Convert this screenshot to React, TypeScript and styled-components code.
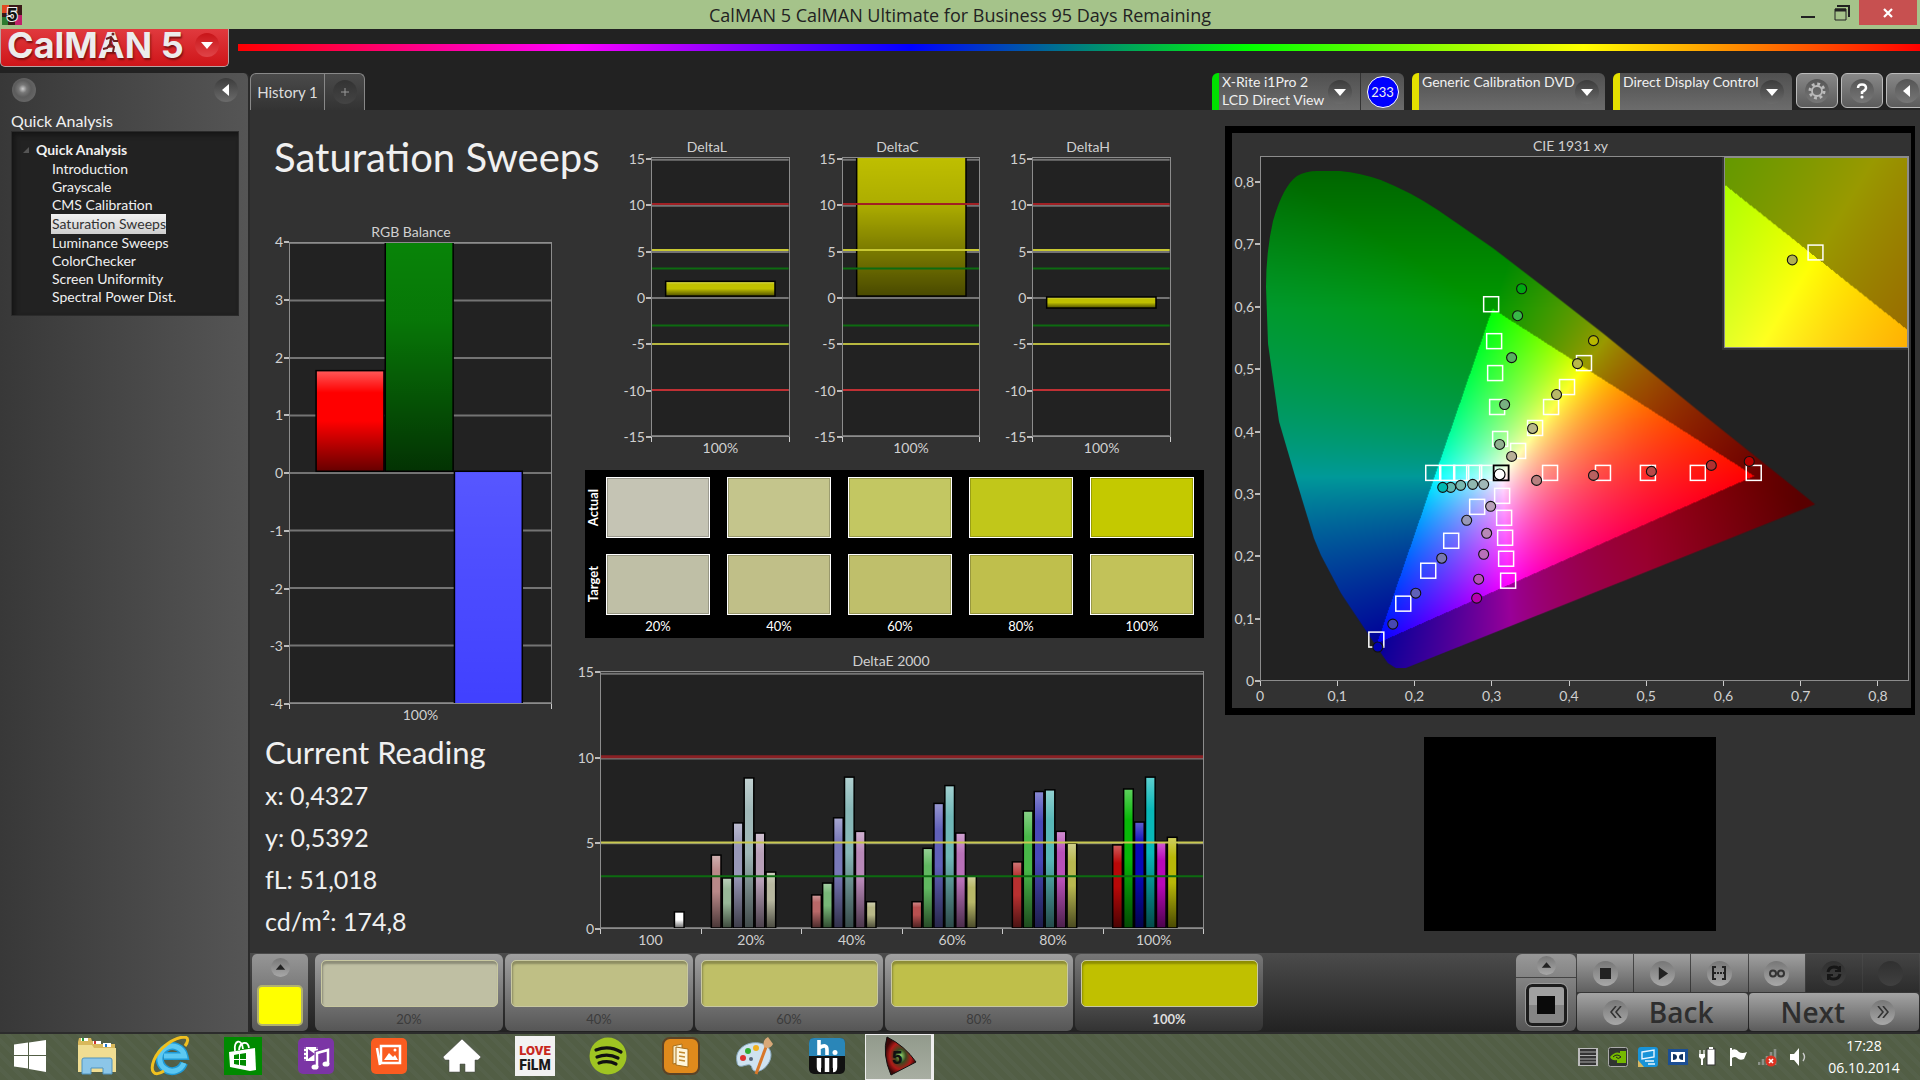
import React, { useEffect, useRef } from 'react';
import styled, { createGlobalStyle } from 'styled-components';

const ui = `Lato, "Open Sans", sans-serif`;
const sys = `"Open Sans", "Noto Sans", sans-serif`;

const GlobalStyle = createGlobalStyle`
  *, *::before, *::after { box-sizing: border-box; }
  body { margin: 0; background: #222; font-family: ${ui}; color: #f0f0f0; }
  button { font: inherit; color: inherit; border: 0; padding: 0; background: none; cursor: pointer; }
  h1, h2, h3, p, ul, dl, dd, dt, figure { margin: 0; padding: 0; }
  ul { list-style: none; }
  a { color: inherit; text-decoration: none; }
  svg, canvas { display: block; }
`;

/* ---------- shell ---------- */

const Page = styled.div`
  min-height: 100vh;
  display: grid;
  grid-template-rows: 29px 1fr 48px;
`;

const TitleBar = styled.header`
  display: grid;
  grid-template-columns: 1fr auto 1fr;
  align-items: center;
  background: #a5c38a;
  color: #222;
`;

const TitleText = styled.div`
  font: 18px/28px ${sys};
  white-space: nowrap;
`;

const WindowButtons = styled.div`
  justify-self: end;
  align-self: start;
  display: flex;
  padding-right: 3px;
`;

const WindowButton = styled.button<{ $close?: boolean }>`
  width: ${p => (p.$close ? 58 : 34)}px;
  height: 25px;
  display: grid;
  place-items: center;
  background: ${p => (p.$close ? '#c75050' : 'transparent')};
`;

const AppArea = styled.div`
  display: flex;
  flex-direction: column;
  background: #222;
`;

const BrandRow = styled.div`
  display: flex;
  height: 44px;
  gap: 9px;
`;

const Brand = styled.button`
  width: 229px;
  height: 38px;
  display: flex;
  align-items: center;
  justify-content: space-between;
  padding: 0 9px 6px 6px;
  border: 1px solid #b9a0a0;
  border-top: 0;
  border-radius: 0 0 5px 5px;
  background: linear-gradient(#e03a3e, #cf1519);
`;

const BrandText = styled.span`
  font: 700 36px/32px Inter, sans-serif;
  color: #ececec;
  text-shadow: 1px 2px 2px #7a1010;
  white-space: nowrap;
`;

const BrandA = styled.span`
  position: relative;
  svg { position: absolute; left: 4px; top: 8px; }
`;

const Rainbow = styled.div`
  flex: 1;
  height: 7px;
  margin-top: 15px;
  background: linear-gradient(90deg, #f00, #f0f 20%, #00f 40%, #0f0 60%, #ff0 80%, #f00);
`;

const Body = styled.div`
  flex: 1;
  display: flex;
`;

const Knob = styled.span<{ $size?: number; $tone?: string }>`
  flex: none;
  width: ${p => p.$size ?? 24}px;
  height: ${p => p.$size ?? 24}px;
  display: grid;
  place-items: center;
  border-radius: 50%;
  background: ${p => p.$tone ?? 'linear-gradient(#3c3c3c, #6b6b6b)'};
`;

/* ---------- sidebar ---------- */

const Sidebar = styled.aside`
  flex: none;
  width: 250px;
  border-right: 2px solid #2a2a2a;
  border-top-right-radius: 6px;
  background: linear-gradient(90deg, #383838, #555);
`;

const SidebarTools = styled.div`
  display: flex;
  justify-content: space-between;
  padding: 5px 10px 0 12px;
`;

const SidebarTitle = styled.h2`
  padding: 9px 11px 0;
  font-size: 16px;
  font-weight: 400;
  line-height: 20px;
`;

const Tree = styled.nav`
  margin: 0 9px 0 11px;
  padding: 8px 0 9px;
  border: 1px solid #2b2b2b;
  background: #222;
  box-shadow: inset 3px 3px 5px #151515;
  font-size: 14px;
  line-height: 18px;
`;

const TreeHead = styled.div`
  display: flex;
  align-items: center;
  gap: 7px;
  padding-left: 11px;
  font-weight: 700;
  line-height: 20px;
`;

const TreeLink = styled.a<{ $active?: boolean }>`
  display: block;
  width: fit-content;
  margin-left: 39px;
  padding-left: 1px;
  line-height: ${p => (p.$active ? 20 : 18)}px;
  background: ${p => (p.$active ? 'linear-gradient(#f2f2f2, #cfcfcf)' : 'none')};
  color: ${p => (p.$active ? '#333' : '#f0f0f0')};
`;

/* ---------- top tabs ---------- */

const Content = styled.main`
  flex: 1;
  min-width: 0;
  display: flex;
  flex-direction: column;
`;

const TabRow = styled.div`
  display: flex;
  justify-content: space-between;
  height: 37px;
  overflow: hidden;
`;

const Tabs = styled.div`
  display: flex;
  border: 1px solid #888;
  border-bottom: 0;
  border-radius: 6px 6px 0 0;
  background: linear-gradient(#4a4a4a, #333);
`;

const Tab = styled.button<{ $add?: boolean }>`
  width: ${p => (p.$add ? 40 : 73)}px;
  display: grid;
  place-items: center;
  font-size: 15px;
  color: #ddd;
  border-left: ${p => (p.$add ? '1px solid #888' : '0')};
`;

const Devices = styled.div`
  display: flex;
  margin-right: -8px;
`;

const Device = styled.div<{ $bar: string; $w: number }>`
  display: flex;
  width: ${p => p.$w}px;
  margin-right: 8px;
  border-left: 7px solid ${p => p.$bar};
  border-radius: 6px 6px 0 0;
  background: linear-gradient(#505050, #6c6c6c);
  &:last-of-type { margin-right: 1px; }
`;

const DeviceMenu = styled.button`
  flex: 1;
  display: flex;
  justify-content: space-between;
  align-items: center;
  padding: 0 8px 0 3px;
  font-size: 14px;
  line-height: 18px;
  text-align: left;
  white-space: nowrap;
`;

const DeviceText = styled.span`
  align-self: start;
`;

const Meter = styled.span`
  display: grid;
  place-items: center;
  width: 44px;
  border-left: 1px solid #333;
`;

const MeterBadge = styled.span`
  width: 32px;
  height: 32px;
  border: 1px solid #fff;
  border-radius: 50%;
  background: #00f;
  font-size: 13px;
  line-height: 30px;
  text-align: center;
`;

const ToolButton = styled.button`
  width: 42px;
  height: 35px;
  margin-left: 3px;
  display: grid;
  place-items: center;
  border: 1px solid #bbb;
  border-radius: 6px;
  background: linear-gradient(#888, #5c5c5c);
`;

/* ---------- workspace ---------- */

const Workspace = styled.section`
  flex: 1;
  display: grid;
  grid-template-columns: 313fr 626fr 711fr;
  padding: 0 5px 0 15px;
  background: #323232;
`;

const LeftColumn = styled.div`
  min-width: 0;
  padding-top: 23px;
`;

const PageTitle = styled.h1`
  margin-bottom: 41px;
  padding-left: 9px;
  font-size: 40px;
  font-weight: 400;
  line-height: 48px;
  white-space: nowrap;
`;

const BalanceBox = styled.div`
  padding: 0 26px 0 5px;
`;

const Reading = styled.section`
  margin-top: 6px;
  font-size: 25px;
  line-height: 42px;
  h2 { font-size: 31px; font-weight: 400; line-height: 44px; }
`;

const MiddleColumn = styled.div`
  min-width: 0;
  padding-top: 27px;
`;

const DeltaRow = styled.div`
  display: grid;
  grid-template-columns: repeat(3, 1fr);
  gap: 25px;
  padding: 0 33px 0 46px;
`;

const RightColumn = styled.div`
  min-width: 0;
  padding: 16px 0 0 21px;
`;

const CiePanel = styled.div`
  padding: 3px 2px 3px 0;
  border: 7px solid #000;
  border-right-width: 4px;
`;

const Preview = styled.div`
  width: 292px;
  height: 194px;
  margin: 22px auto 0;
  background: #000;
`;

/* ---------- charts ---------- */

const Chart = styled.figure<{ $gutter: number }>`
  display: grid;
  grid-template-columns: ${p => p.$gutter}px minmax(0, 1fr);
  font-size: 14px;
  line-height: 18px;
  color: #d0d0d0;
`;

const ChartTitle = styled.figcaption`
  grid-column: 1 / -1;
  line-height: 20px;
  text-align: center;
`;

const YAxis = styled.div<{ $top: number }>`
  display: flex;
  flex-direction: column;
  justify-content: space-between;
  padding-top: ${p => p.$top}px;
`;

const YTick = styled.span`
  display: flex;
  align-items: center;
  justify-content: flex-end;
  height: 18px;
  margin: -9px 0;
  white-space: nowrap;
  &::after { content: ''; flex: none; width: 5px; height: 2px; margin-left: 1px; background: #bbb; }
`;

const Plot = styled.div<{ $h: number }>`
  display: grid;
  height: ${p => p.$h}px;
  border: 1px solid #8c8c8c;
  background: #222;
  & > * { grid-area: 1 / 1; width: 100%; height: 100%; min-height: 0; }
`;

const XAxis = styled.div<{ $right: number }>`
  grid-column: 2;
  padding-right: ${p => p.$right}px;
`;

const XTicks = styled.div`
  display: flex;
  justify-content: space-between;
  i { width: 1px; height: 5px; background: #ccc; }
`;

const XCategories = styled.div`
  display: flex;
  margin-top: -3px;
  span { flex: 1; text-align: center; }
`;

const XValues = styled.div`
  display: flex;
  justify-content: space-between;
  margin-top: 1px;
  span { width: 30px; margin: 0 -15px; text-align: center; }
`;

type Shade = 'gloss' | 'tall' | 'cool';
interface BarSpec { x: number; w: number; from: number; to: number; color: string; shade?: Shade }
interface Limit { v: number; color: string; w: number }

const pct = (n: number) => `${n}%`;

function BarChart(props: {
  id: string; title: string; gutter: number; height: number; min: number; max: number; top: number;
  ticks: number[]; categories: string[]; bars: BarSpec[]; limits?: Limit[];
}) {
  const { id, min, max, ticks, bars, limits = [] } = props;
  const y = (v: number) => ((max - v) / (max - min)) * 100;
  return (
    <Chart $gutter={props.gutter}>
      <ChartTitle>{props.title}</ChartTitle>
      <YAxis $top={props.top}>{ticks.map(t => <YTick key={t}>{t}</YTick>)}</YAxis>
      <Plot $h={props.height}>
        <svg aria-hidden="true">
          <defs>
            <linearGradient id={`${id}-gloss`} x1="0" y1="0" x2="0" y2="1">
              <stop offset="0" stopColor="#fff" stopOpacity=".35" />
              <stop offset=".22" stopColor="#fff" stopOpacity="0" />
              <stop offset=".5" stopColor="#000" stopOpacity="0" />
              <stop offset="1" stopColor="#000" stopOpacity=".6" />
            </linearGradient>
            <linearGradient id={`${id}-tall`} x1="0" y1="0" x2="0" y2="1">
              <stop offset="0" stopColor="#000" stopOpacity="0" />
              <stop offset=".35" stopColor="#000" stopOpacity=".1" />
              <stop offset="1" stopColor="#000" stopOpacity=".62" />
            </linearGradient>
            <linearGradient id={`${id}-cool`} x1="0" y1="0" x2="0" y2="1">
              <stop offset="0" stopColor="#fff" stopOpacity=".12" />
              <stop offset="1" stopColor="#fff" stopOpacity="0" />
            </linearGradient>
          </defs>
          {ticks.map(t => (
            <line key={t} x1="0" x2="100%" y1={pct(y(t))} y2={pct(y(t))} stroke="#747474" strokeWidth="2" />
          ))}
          {bars.map((b, i) => {
            const box = { x: pct(b.x), width: pct(b.w), y: pct(y(b.to)), height: pct(y(b.from) - y(b.to)) };
            return (
              <g key={i}>
                <rect {...box} fill={b.color} />
                <rect {...box} fill={`url(#${id}-${b.shade ?? 'gloss'})`} stroke="#000" strokeWidth="1.5" />
              </g>
            );
          })}
          {limits.map((l, i) => (
            <line key={i} x1="0" x2="100%" y1={pct(y(l.v))} y2={pct(y(l.v))} stroke={l.color} strokeWidth={l.w} />
          ))}
        </svg>
      </Plot>
      <XAxis $right={0}>
        <XTicks>{[...props.categories, ''].map((_, i) => <i key={i} />)}</XTicks>
        <XCategories>{props.categories.map(c => <span key={c}>{c}</span>)}</XCategories>
      </XAxis>
    </Chart>
  );
}

const deltaTicks = [15, 10, 5, 0, -5, -10, -15];
const deltaLimits: Limit[] = [
  { v: 10.2, color: '#a02024', w: 2 },
  { v: 5.2, color: '#c8c832', w: 2 },
  { v: 3.2, color: '#0d6b10', w: 2 },
  { v: -3, color: '#0d6b10', w: 2 },
  { v: -5, color: '#b8b840', w: 2 },
  { v: -10, color: '#c03034', w: 2 },
];

const groups: { values: number[]; colors: string[] }[] = [
  { values: [4.3, 2.95, 6.2, 8.85, 5.6, 3.3], colors: ['#b88888', '#98b898', '#9898b8', '#a0b8b8', '#b8a0b8', '#b8b8a0'] },
  { values: [1.95, 2.65, 6.5, 8.9, 5.7, 1.55], colors: ['#b86868', '#78b878', '#7878b8', '#88b8b8', '#b888b8', '#b8b888'] },
  { values: [1.55, 4.7, 7.35, 8.4, 5.6, 3.05], colors: ['#b85050', '#60b860', '#6060b8', '#70b8b8', '#b870b8', '#b8b868'] },
  { values: [3.9, 6.9, 8.05, 8.15, 5.7, 5], colors: ['#b83030', '#48b848', '#4848b8', '#58b8b8', '#b850b8', '#b8b850'] },
  { values: [4.9, 8.2, 6.25, 8.9, 5.1, 5.35], colors: ['#b80808', '#08b808', '#0808b8', '#08b8b8', '#b808b8', '#b8b808'] },
];

const errorBars: BarSpec[] = [
  { x: 12.2, w: 1.6, from: 0, to: 0.95, color: '#fff' },
  ...groups.flatMap((g, gi) =>
    g.values.map((v, i) => ({
      x: (gi + 1) * 16.667 + (10 + i * 10.9) / 6,
      w: 1.6,
      from: 0,
      to: v,
      color: g.colors[i],
    })),
  ),
];

/* ---------- chromaticity diagram ---------- */

const PLOT_W = 648;
const PLOT_H = 524;
const UX = 771;
const UY = 621;

const R = [0.64, 0.33];
const G = [0.3, 0.6];
const B = [0.15, 0.06];

const side = (a: number[], b: number[], x: number, y: number) =>
  (b[0] - a[0]) * (y - a[1]) - (b[1] - a[1]) * (x - a[0]);
const clamp = (n: number) => Math.max(0, Math.min(1, n));

function chroma(x: number, y: number): [number, number, number] {
  const yy = Math.max(y, 0.005);
  const X = x / yy;
  const Z = (1 - x - yy) / yy;
  let r = Math.max(0, 3.2406 * X - 1.5372 - 0.4986 * Z);
  let g = Math.max(0, -0.9689 * X + 1.8758 + 0.0415 * Z);
  let b = Math.max(0, 0.0557 * X - 0.204 + 1.057 * Z);
  const m = Math.max(r, g, b);
  r = (r / m) ** 0.9;
  g = (g / m) ** 0.9;
  b = (b / m) ** 0.9;
  const inside = side(R, G, x, y) >= 0 && side(G, B, x, y) >= 0 && side(B, R, x, y) >= 0;
  let k = 255;
  if (!inside) {
    const fadeR = Math.max(0, r - Math.max(g, b)) * clamp((x - 0.5) / 0.2) * 0.25;
    const fadeG = Math.max(0, g - Math.max(r, b)) * clamp((y - 0.6) / 0.22) * 0.2;
    k = 255 * (0.6 - fadeR - fadeG);
  }
  return [r * k, g * k, b * k];
}

const locus =
  'M145 512L135 512L127 507L118 494L106 476L80 437L60 399L53 382L35 323L18 265L7 187L5 130Q5 95 12 64Q22 29 36 19Q45 14 56 14L79 14Q100 16 120 23Q150 35 177 53L232 91L288 134L343 177L396 220L444 259L484 291L514 315L534 331L555 348Z';

function ChromaCanvas(props: { w: number; h: number; x0: number; y0: number; ux: number; uy: number; clip?: string }) {
  const ref = useRef<HTMLCanvasElement>(null);
  useEffect(() => {
    const canvas = ref.current;
    const ctx = canvas?.getContext('2d');
    if (!canvas || !ctx) return;
    const layer = document.createElement('canvas');
    layer.width = props.w;
    layer.height = props.h;
    const lctx = layer.getContext('2d')!;
    const img = lctx.createImageData(props.w, props.h);
    for (let py = 0; py < props.h; py++) {
      for (let px = 0; px < props.w; px++) {
        const [r, g, b] = chroma(props.x0 + px / props.ux, props.y0 - py / props.uy);
        const i = (py * props.w + px) * 4;
        img.data[i] = r;
        img.data[i + 1] = g;
        img.data[i + 2] = b;
        img.data[i + 3] = 255;
      }
    }
    lctx.putImageData(img, 0, 0);
    ctx.save();
    if (props.clip) ctx.clip(new Path2D(props.clip));
    ctx.drawImage(layer, 0, 0);
    ctx.restore();
  }, []);
  return <canvas ref={ref} width={props.w} height={props.h} />;
}

const targets: [number, number][] = [
  [231, 148], [234, 185], [235, 217], [237, 251], [240, 283],
  [324, 207], [307, 231], [291, 251], [275, 272], [258, 295],
  [173, 317], [187, 317], [201, 317], [214, 317], [227, 317],
  [290, 317], [343, 317], [388, 317], [438, 317], [494, 317],
  [242, 340], [244, 362], [245, 382], [246, 403], [248, 425],
  [217, 351], [191, 385], [168, 415], [143, 448], [116, 484],
];

const readings: [number, number, string][] = [
  [262, 134, '#00a810'], [258, 161, '#38b848'], [252, 203, '#58b060'], [245, 250, '#78b080'], [240, 290, '#90b090'],
  [334, 186, '#b8b800'], [318, 209, '#b8b848'], [297, 240, '#b8b868'], [273, 274, '#b8b888'], [252, 302, '#b8b098'],
  [191, 333, '#60b8b0'], [183, 333, '#00b8b0'], [201, 331, '#78b8b0'], [213, 330, '#90b8b0'], [224, 330, '#a0b8b8'],
  [277, 326, '#b88080'], [334, 321, '#b86060'], [392, 317, '#b84848'], [452, 311, '#b03030'], [490, 307, '#b80000'],
  [231, 352, '#b8a0b8'], [227, 379, '#b888b8'], [224, 400, '#b870b8'], [219, 425, '#b850b8'], [217, 444, '#b800b0'],
  [207, 366, '#9898b8'], [182, 404, '#7878b0'], [156, 439, '#6060b8'], [133, 470, '#4848b0'], [118, 493, '#0000b0'],
];

const Inset = styled.div`
  && { width: 186px; height: 193px; }
  justify-self: end;
  display: grid;
  border: solid #323232;
  border-width: 0 0 2px 2px;
  & > * { grid-area: 1 / 1; width: 100%; height: 100%; border: 1px solid #8c8c8c; }
`;

const axisValues = ['0', '0,1', '0,2', '0,3', '0,4', '0,5', '0,6', '0,7', '0,8'];

function CieChart() {
  return (
    <Chart $gutter={28}>
      <ChartTitle>CIE 1931 xy</ChartTitle>
      <YAxis $top={26}>{[...axisValues].reverse().map(v => <YTick key={v}>{v}</YTick>)}</YAxis>
      <Plot $h={PLOT_H + 1}>
        <ChromaCanvas w={PLOT_W} h={PLOT_H} x0={0} y0={PLOT_H / UY} ux={UX} uy={UY} clip={locus} />
        <svg viewBox={`0 0 ${PLOT_W} ${PLOT_H}`} preserveAspectRatio="none" aria-hidden="true">
          {targets.map(([x, y], i) => (
            <rect key={i} x={x - 8} y={y - 8} width="15" height="15" fill="none" stroke="#fff" strokeWidth="1.5" />
          ))}
          <rect x="233" y="309" width="15" height="15" fill="none" stroke="#000" strokeWidth="1.8" />
          {readings.map(([x, y, c], i) => (
            <circle key={i} cx={x - 1} cy={y - 2} r="5" fill={c} stroke="#111" strokeWidth="1.1" />
          ))}
          <circle cx="239" cy="318" r="5.4" fill="#fff" stroke="#000" strokeWidth="1.2" />
        </svg>
        <Inset>
          <ChromaCanvas w={184} h={191} x0={0.4193 - 91 / 3000} y0={0.5053 + 96 / 2900} ux={3000} uy={3000} />
          <svg viewBox="0 0 184 191" aria-hidden="true">
            <rect x="84" y="88" width="15" height="15" fill="none" stroke="#fff" strokeWidth="1.5" />
            <circle cx="68" cy="103" r="5" fill="#b0b050" stroke="#111" strokeWidth="1.1" />
          </svg>
        </Inset>
      </Plot>
      <XAxis $right={31}>
        <XTicks>{axisValues.map(v => <i key={v} />)}</XTicks>
        <XValues>{axisValues.map(v => <span key={v}>{v}</span>)}</XValues>
      </XAxis>
    </Chart>
  );
}

/* ---------- actual / target panel ---------- */

const SwatchPanel = styled.div`
  display: grid;
  grid-template-columns: 21px 1fr;
  row-gap: 16px;
  margin: 13px 0 13px 7px;
  padding: 7px 10px 2px 0;
  background: #000;
  color: #fff;
`;

const SwatchLabel = styled.span`
  place-self: center start;
  writing-mode: vertical-rl;
  transform: rotate(180deg);
  font-size: 13px;
  font-weight: 700;
  line-height: 16px;
`;

const SwatchRow = styled.div`
  display: grid;
  grid-template-columns: repeat(5, 1fr);
  gap: 17px;
`;

const Swatch = styled.div<{ $c: string }>`
  height: 61px;
  border: 1px solid #fff;
  background: ${p => p.$c};
  box-shadow: inset 0 0 0 1px #0003;
`;

const SwatchNames = styled(SwatchRow)`
  grid-column: 2;
  margin-top: -15px;
  font-size: 13px;
  line-height: 20px;
  text-align: center;
`;

const levels = ['20%', '40%', '60%', '80%', '100%'];
const actual = ['#c5c4b4', '#c4c58c', '#c3c762', '#c1c71a', '#c4c900'];
const target = ['#bfbfa6', '#c0bf88', '#bfbf6b', '#bfbf4c', '#c2c259'];
const patches = ['#bfbfa3', '#bfbf85', '#bfbf67', '#bfbf4a', '#c0c000'];

/* ---------- bottom bar ---------- */

const BottomBar = styled.div`
  display: flex;
  height: 79px;
  padding: 1px 1px 1px 2px;
  background: linear-gradient(#4b4b4b, #222);
`;

const ColorPicker = styled.button`
  width: 56px;
  margin-right: 7px;
  display: flex;
  flex-direction: column;
  align-items: center;
  gap: 8px;
  padding-top: 4px;
  border-radius: 5px;
  background: linear-gradient(#969696, #585858);
  i { width: 46px; height: 41px; border: 2px solid #b0b070; border-radius: 5px; background: #ff0; }
`;

const PatchButton = styled.button<{ $on?: boolean }>`
  width: 188px;
  margin-right: 2px;
  display: flex;
  flex-direction: column;
  align-items: center;
  padding-top: 6px;
  border-radius: 6px;
  background: ${p => (p.$on ? 'linear-gradient(#777, #333)' : 'linear-gradient(#a0a0a0, #565656)')};
  color: ${p => (p.$on ? '#ddd' : '#3c3c3c')};
  font-size: 13px;
  font-weight: ${p => (p.$on ? 700 : 400)};
  line-height: 24px;
`;

const PatchColor = styled.i<{ $c: string }>`
  width: 177px;
  height: 48px;
  border: 1px solid #c8c8a0;
  border-radius: 5px;
  background: ${p => p.$c};
  box-shadow: inset 1px 3px 2px #0004;
`;

const Spacer = styled.div`
  flex: 1;
`;

const PatternBox = styled.div`
  width: 60px;
  margin-right: 1px;
  display: grid;
  grid-template-rows: 23px 1fr;
  border-radius: 6px;
  background: linear-gradient(#989898, #555);
  button { display: grid; place-items: center; }
  button + button { border-top: 1px solid #444; }
`;

const PatternFrame = styled.span`
  width: 41px;
  height: 42px;
  display: grid;
  place-items: center;
  border: 3px solid #1c1c1c;
  outline: 1px solid #999;
  border-radius: 6px;
  background: linear-gradient(#a0a0a0 50%, #858585 50%);
  i { width: 18px; height: 18px; background: #0a0a0a; }
`;

const Transport = styled.div`
  width: 342px;
  display: grid;
  grid-template-columns: repeat(6, 1fr);
  grid-template-rows: 38px 38px;
  gap: 1px;
`;

const TransportButton = styled.button<{ $off?: boolean }>`
  display: grid;
  place-items: center;
  background: ${p => (p.$off ? 'linear-gradient(#444, #2c2c2c)' : 'linear-gradient(#a0a0a0, #606060)')};
`;

const StepButton = styled.button`
  grid-column: span 3;
  display: flex;
  align-items: center;
  justify-content: space-between;
  padding: 0 34px 0 26px;
  border-radius: 4px;
  background: linear-gradient(#a4a4a4, #5c5c5c);
  color: #2e2e2e;
  font: 600 28px/36px ${sys};
  &:last-child { padding: 0 24px 0 32px; }
`;

const knobLight = 'linear-gradient(#777, #a8a8a8)';
const knobDark = 'linear-gradient(#303030, #404040)';

/* ---------- taskbar ---------- */

const TaskBar = styled.footer`
  display: flex;
  align-items: center;
  border-top: 2px solid #2c2c2c;
  background: repeating-linear-gradient(45deg, #525e45 0 6px, #55614a 6px 10px);
`;

const TaskButton = styled.button<{ $first?: boolean; $active?: boolean }>`
  width: ${p => (p.$first ? 60 : p.$active ? 69 : 73)}px;
  height: 46px;
  margin-left: ${p => (p.$active ? 2 : 0)}px;
  padding-bottom: 2px;
  display: grid;
  place-items: center;
  border: ${p => (p.$active ? '1px solid #eee' : '0')};
  border-right-width: ${p => (p.$active ? 3 : 0)}px;
  background: ${p => (p.$active ? 'linear-gradient(#929a8c, #a8aea2)' : 'none')};
`;

const Tray = styled.div`
  display: flex;
  gap: 10px;
  margin-left: auto;
`;

const Clock = styled.time`
  width: 112px;
  font: 14px/22px ${sys};
  text-align: center;
  color: #fff;
`;

/* ---------- drawings ---------- */

const Triangle = ({ d, s = 14, c = '#fff' }: { d: 'down' | 'left' | 'up' | 'right'; s?: number; c?: string }) => {
  const pts = { down: '1,4 13,4 7,11', left: '10,1 10,13 3,7', up: '1,10 13,10 7,3', right: '3,0 3,14 13,7' }[d];
  return (
    <svg width={s} height={s} viewBox="0 0 14 14">
      <polygon points={pts} fill={c} />
    </svg>
  );
};

const Svg40 = ({ children }: { children: React.ReactNode }) => (
  <svg width="40" height="40" viewBox="0 0 40 40">{children}</svg>
);

const taskIcons: [string, React.ReactNode][] = [
  ['Start', <g fill="#fff"><path d="M4 8.500L18 6.500V19H4zM19 6.400L36 4V19H19zM4 20H18V32.500L4 30.500zM19 20H36V36L19 33z" /></g>],
  ['File Explorer', <g>
    <path d="M1 6L2 2H14L15 5H22L24 8H38V36H1z" fill="#d9b85c" />
    <path d="M4 2h7v3H4zM16 5h8v3h-8zM26 7h8v4h-8z" fill="#fff" />
    <path d="M5 2h2v3H5z" fill="#2a9a3a" /><path d="M17 5h2v3h-2z" fill="#c33" /><path d="M28 8h2v3h-2z" fill="#27c" />
    <path d="M1 9H15L17 12H39V36H1z" fill="#f0dd92" />
    <path d="M5 24Q5 22 7 22H33Q35 22 35 24V38H26V32H14V38H5z" fill="#8cc6e8" stroke="#4e93bf" />
  </g>],
  ['Internet Explorer', <g fill="none">
    <path d="M34 27A12.500 12.500 0 1 1 34.500 20H14" stroke="#1f9ad6" strokeWidth="8" />
    <path d="M34 27A12.500 12.500 0 1 1 34.500 20H14" stroke="#5cc8f2" strokeWidth="5" />
    <path d="M14 35C3 42 0 34 4 24C9 12 24 1 35 1C39 2 38 6 35 10" stroke="#f0c020" strokeWidth="3" />
  </g>],
  ['Store', <g>
    <rect x="1" y="1" width="38" height="38" fill="#008a00" />
    <path d="M6 16L32 12L33 34L27 35L7 31z" fill="#fff" />
    <path d="M12 15C10 4 19 2 20 13M16 14C17 5 25 5 26 12" stroke="#fff" strokeWidth="1.800" fill="none" />
    <path d="M11 19L16 18V23H11zM17 18L23 17V23H17zM11 24H16V29L11 28zM17 24H23V30L17 29z" fill="#008a00" />
  </g>],
  ['Video and Music', <g>
    <rect x="2" y="2" width="36" height="36" rx="5" fill="#7b35a5" />
    <path d="M8 11H22V25H8z" fill="#fff" /><path d="M12 13L19 18L12 23z" fill="#7b35a5" />
    <path d="M9 11v14M21 11v14" stroke="#7b35a5" strokeWidth="1.500" strokeDasharray="2 2" />
    <path d="M21 31V17L32 14V28" stroke="#7b35a5" strokeWidth="5" fill="none" />
    <path d="M21 31V17L32 14V28" stroke="#fff" strokeWidth="2.500" fill="none" />
    <ellipse cx="19" cy="31" rx="3.500" ry="2.600" fill="#fff" /><ellipse cx="30" cy="28" rx="3.500" ry="2.600" fill="#fff" />
  </g>],
  ['Photos', <g>
    <rect x="2" y="2" width="36" height="36" rx="5" fill="#fa5c20" />
    <path d="M8 12L11 29M12 10H31V27H12z" stroke="#fff" strokeWidth="2.500" fill="none" />
    <path d="M15 24L20 17L24 21L26 19L29 24z" fill="#fff" /><circle cx="26" cy="14" r="1.500" fill="#fff" />
  </g>],
  ['Home', <path d="M20 3L39 21L36 24H33V36H23V28H18V36H7V24H3L1 21z" fill="#fff" stroke="#444" strokeWidth=".5" />],
  ['LoveFilm', <g>
    <rect width="40" height="40" fill="#f2f2f2" />
    <text x="20" y="19" textAnchor="middle" fontFamily="Roboto" fontWeight="900" fontSize="13" fill="#c8281e">LOVE</text>
    <text x="20" y="34" textAnchor="middle" fontFamily="Roboto" fontWeight="900" fontSize="14" fill="#1a1a1a">FiLM</text>
  </g>],
  ['Spotify', <g>
    <circle cx="20" cy="20" r="18.500" fill="#9fc422" />
    <path d="M8 14Q21 9 33 16M9 21Q20 17 30 22M11 27Q20 24 28 28" stroke="#111" strokeWidth="3.200" strokeLinecap="round" fill="none" />
  </g>],
  ['Notes', <g>
    <rect x="2" y="2" width="36" height="36" rx="7" fill="#e08a1c" stroke="#5b4326" strokeWidth="2" />
    <path d="M12 10L21 8V26L12 28z" fill="#f8ecc8" stroke="#a8701c" /><path d="M15 11L27 13V31L15 29z" fill="#fff6dc" stroke="#a8701c" />
    <path d="M18 16l6 1M18 20l6 1M18 24l6 1" stroke="#c08a30" strokeWidth="1.500" />
  </g>],
  ['Paint', <g>
    <path d="M3 26C0 14 12 5 25 7C37 9 40 19 34 28C28 37 19 37 18 32C17 27 13 29 9 30C5 31 3 29 3 26z" fill="#cfe2f0" stroke="#88a8c0" />
    <circle cx="9" cy="22" r="3" fill="#d33" /><circle cx="14" cy="15" r="3" fill="#3a3" /><circle cx="22" cy="12" r="3" fill="#f0b020" />
    <circle cx="17" cy="23" r="2" fill="#55657a" />
    <path d="M22 38L32 11" stroke="#d8782a" strokeWidth="3" /><path d="M30 11Q28 4 34 1L39 8Q37 12 33 12z" fill="#d8a878" />
  </g>],
  ['Humax', <g>
    <rect x="2" y="2" width="36" height="36" rx="5" fill="#111" />
    <path d="M2 20V7Q2 2 7 2H33Q38 2 38 7V20z" fill="#2a86b8" />
    <path d="M12 4V19M12 12Q20 7 20 14V19" stroke="#fff" strokeWidth="3.600" fill="none" /><circle cx="28" cy="16.500" r="2.500" fill="#fff" />
    <path d="M12 22V31Q12 34 14 34M20 22V36M28 22V31Q28 34 26 34" stroke="#fff" strokeWidth="4.500" fill="none" />
  </g>],
  ['CalMAN 5', <g>
    <defs>
      <radialGradient id="fan"><stop offset="0" stopColor="#9adf70" /><stop offset=".35" stopColor="#3a4a20" /><stop offset=".7" stopColor="#b01a18" /><stop offset="1" stopColor="#3a0808" /></radialGradient>
    </defs>
    <path d="M8 1Q3 18 12 39L37 26Q26 10 8 1z" fill="url(#fan)" stroke="#111" />
    <text x="18" y="28" textAnchor="middle" fontFamily="Inter" fontWeight="800" fontSize="17" fill="#111">5</text>
  </g>],
];

const trayIcons: [string, React.ReactNode][] = [
  ['Keyboard', <g><rect y="1" width="20" height="18" fill="#bbb" /><rect x="2" y="2" width="16" height="16" fill="#333" /><path d="M2 5h16M2 8.500h16M2 12h16M2 15h16" stroke="#aaa" /></g>],
  ['Graphics', <g><rect x=".5" y=".5" width="19" height="19" rx="2" fill="#303430" stroke="#aaa" /><path d="M2 10Q7 4 12 6V4H18V16H9V13Q4 14 2 10z" fill="#76b900" /><path d="M5 10Q9 6 13 10Q10 13 8 10" stroke="#222" fill="none" /></g>],
  ['Display settings', <g><rect width="20" height="20" rx="3" fill="#1893d8" /><path d="M4 5L16 3V10L4 12zM7 14h9M10 17h7" stroke="#e8f6ff" strokeWidth="1.400" fill="none" /><path d="M0 13L6 20H0z" fill="#d8b860" /></g>],
  ['Dolby', <g><rect y="2" width="20" height="16" fill="#1c4f94" /><rect x="3" y="5" width="14" height="10" fill="#fff" /><path d="M5 7Q9 7 9 10T5 13zM15 7Q11 7 11 10T15 13z" fill="#12325e" /></g>],
  ['Battery', <g><rect x="9" y="2" width="8" height="16" fill="#fff" stroke="#333" /><path d="M11 1h4" stroke="#fff" strokeWidth="2" /><path d="M2 3V8M6 3V8" stroke="#fff" strokeWidth="1.200" /><path d="M1 7h6v3L5 12V18H3V12L1 10z" fill="#fff" /></g>],
  ['Action center', <path d="M2 1H4V3Q8 1 11 5Q14 7 19 5L16 12Q12 14 9 11Q7 9 4 11V19H2z" fill="#fff" />],
  ['Network', <g><path d="M1 18V15M5 18V12M9 18V9M13 18V5M17 18V2" stroke="#8b928a" strokeWidth="2.600" /><circle cx="13" cy="14" r="5.500" fill="#d32" /><path d="M11 12L15 16M15 12L11 16" stroke="#fff" strokeWidth="1.600" /></g>],
  ['Volume', <g><path d="M2 7H6L11 1V19L6 13H2z" fill="#fff" /><path d="M15 6Q18 10 15 14" stroke="#ccc" strokeWidth="1.400" fill="none" /></g>],
];

const pages = ['Introduction', 'Grayscale', 'CMS Calibration', 'Saturation Sweeps', 'Luminance Sweeps', 'ColorChecker', 'Screen Uniformity', 'Spectral Power Dist.'];

export default function App() {
  return (
    <>
      <GlobalStyle />
      <Page>
        <TitleBar>
          <svg width="24" height="20" viewBox="0 0 24 20">
            <rect width="20" height="20" x="2" fill="#3a1a18" />
            <path d="M2 0H9V8H2z" fill="#e04a20" /><path d="M15 10H22V20H15z" fill="#c0206a" /><path d="M2 12H8V20H2z" fill="#2c7a30" />
            <text x="12" y="16" textAnchor="middle" fontFamily="Inter" fontWeight="800" fontSize="17" fill="#111" stroke="#eee" strokeWidth="2" paintOrder="stroke">5</text>
          </svg>
          <TitleText>CalMAN 5 CalMAN Ultimate for Business 95 Days Remaining</TitleText>
          <WindowButtons>
            <WindowButton aria-label="Minimize"><svg width="14" height="14"><path d="M0 11h14" stroke="#222" strokeWidth="2" /></svg></WindowButton>
            <WindowButton aria-label="Restore">
              <svg width="16" height="16" fill="none" stroke="#222"><path d="M3 1H15V12" strokeWidth="2" /><path d="M1 4H12V15H1z" /><path d="M1 5h11" strokeWidth="3" /></svg>
            </WindowButton>
            <WindowButton $close aria-label="Close"><svg width="10" height="10"><path d="M1 1L9 9M9 1L1 9" stroke="#fff" strokeWidth="2.2" /></svg></WindowButton>
          </WindowButtons>
        </TitleBar>

        <AppArea>
          <BrandRow>
            <Brand>
              <BrandText>
                CalM
                <BrandA>
                  A
                  <svg width="18" height="22" viewBox="0 0 18 22" fill="none" stroke="#6b2020" strokeWidth="2">
                    <circle cx="11" cy="3" r="1.500" fill="#6b2020" stroke="none" />
                    <path d="M4 8L9 6L12 10L16 10M9 7L8 13L12 16L11 21M8 13L5 17L1 18" />
                  </svg>
                </BrandA>
                N 5
              </BrandText>
              <Knob $tone="linear-gradient(#c81418, #e04448)"><Triangle d="down" /></Knob>
            </Brand>
            <Rainbow />
          </BrandRow>

          <Body>
            <Sidebar>
              <SidebarTools>
                <Knob $tone="radial-gradient(circle at 45% 45%, #ccc 0, #777 22%, #5c5c5c 45%, #707070)" />
                <Knob><Triangle d="left" /></Knob>
              </SidebarTools>
              <SidebarTitle>Quick Analysis</SidebarTitle>
              <Tree>
                <TreeHead>
                  <svg width="6" height="6"><path d="M6 0V6H0z" fill="#555" /></svg>
                  Quick Analysis
                </TreeHead>
                <ul>
                  {pages.map(p => (
                    <li key={p}><TreeLink href="#" $active={p === 'Saturation Sweeps'}>{p}</TreeLink></li>
                  ))}
                </ul>
              </Tree>
            </Sidebar>

            <Content>
              <TabRow>
                <Tabs>
                  <Tab>History 1</Tab>
                  <Tab $add aria-label="Add history"><Knob $tone="linear-gradient(#333, #444)">
                    <svg width="8" height="8"><path d="M0 4H8M4 0V8" stroke="#999" /></svg>
                  </Knob></Tab>
                </Tabs>
                <Devices>
                  <Device $bar="#00e000" $w={192}>
                    <DeviceMenu>
                      <DeviceText>X-Rite i1Pro 2<br />LCD Direct View</DeviceText>
                      <Knob><Triangle d="down" /></Knob>
                    </DeviceMenu>
                    <Meter><MeterBadge>233</MeterBadge></Meter>
                  </Device>
                  <Device $bar="#e4e000" $w={193}>
                    <DeviceMenu><DeviceText>Generic Calibration DVD</DeviceText><Knob><Triangle d="down" /></Knob></DeviceMenu>
                  </Device>
                  <Device $bar="#e4e000" $w={179}>
                    <DeviceMenu><DeviceText>Direct Display Control</DeviceText><Knob><Triangle d="down" /></Knob></DeviceMenu>
                  </Device>
                  <ToolButton aria-label="Settings">
                    <Knob $tone="linear-gradient(#555, #777)">
                      <svg width="18" height="18" viewBox="0 0 18 18" fill="none" stroke="#bbb">
                        <circle cx="9" cy="9" r="7" strokeWidth="3" strokeDasharray="2.800 2.700" /><circle cx="9" cy="9" r="5" strokeWidth="1.800" />
                      </svg>
                    </Knob>
                  </ToolButton>
                  <ToolButton aria-label="Help">
                    <Knob $tone="linear-gradient(#555, #777)">
                      <svg width="12" height="16" viewBox="0 0 12 16"><path d="M2 5Q2 1.500 6 1.500T10 5Q10 7 6 9V11" stroke="#fff" strokeWidth="2.500" fill="none" /><circle cx="6" cy="14" r="1.600" fill="#fff" /></svg>
                    </Knob>
                  </ToolButton>
                  <ToolButton aria-label="Collapse"><Knob $tone="linear-gradient(#555, #777)"><Triangle d="left" /></Knob></ToolButton>
                </Devices>
              </TabRow>

              <Workspace>
                <LeftColumn>
                  <PageTitle>Saturation Sweeps</PageTitle>
                  <BalanceBox>
                    <BarChart
                      id="rgb" title="RGB Balance" gutter={19} height={462} min={-4} max={4} top={0}
                      ticks={[4, 3, 2, 1, 0, -1, -2, -3, -4]} categories={['100%']}
                      bars={[
                        { x: 10, w: 26, from: 0.03, to: 1.78, color: '#ff0000' },
                        { x: 36.5, w: 26, from: 0.03, to: 4.1, color: '#088408', shade: 'tall' },
                        { x: 63, w: 26, from: -4.1, to: 0.03, color: '#4040ff', shade: 'cool' },
                      ]}
                    />
                  </BalanceBox>
                  <Reading>
                    <h2>Current Reading</h2>
                    <p>x: 0,4327</p>
                    <p>y: 0,5392</p>
                    <p>fL: 51,018</p>
                    <p>cd/m²: 174,8</p>
                  </Reading>
                </LeftColumn>

                <MiddleColumn>
                  <DeltaRow>
                    <BarChart id="dl" title="DeltaL" gutter={27} height={280} min={-15} max={15.2} top={2} ticks={deltaTicks}
                      categories={['100%']} limits={deltaLimits} bars={[{ x: 10, w: 80, from: 0.2, to: 1.8, color: '#c0c000' }]} />
                    <BarChart id="dc" title="DeltaC" gutter={27} height={280} min={-15} max={15.2} top={2} ticks={deltaTicks}
                      categories={['100%']} limits={deltaLimits} bars={[{ x: 10, w: 80, from: 0.2, to: 15.6, color: '#c0c000', shade: 'tall' }]} />
                    <BarChart id="dh" title="DeltaH" gutter={27} height={280} min={-15} max={15.2} top={2} ticks={deltaTicks}
                      categories={['100%']} limits={deltaLimits} bars={[{ x: 10, w: 80, from: -1.1, to: 0.1, color: '#c0c000' }]} />
                  </DeltaRow>
                  <SwatchPanel>
                    <SwatchLabel>Actual</SwatchLabel>
                    <SwatchRow>{actual.map(c => <Swatch key={c} $c={c} />)}</SwatchRow>
                    <SwatchLabel>Target</SwatchLabel>
                    <SwatchRow>{target.map(c => <Swatch key={c} $c={c} />)}</SwatchRow>
                    <SwatchNames>{levels.map(l => <span key={l}>{l}</span>)}</SwatchNames>
                  </SwatchPanel>
                  <BarChart
                    id="de" title="DeltaE 2000" gutter={22} height={258} min={0} max={15.1} top={1}
                    ticks={[15, 10, 5, 0]} categories={['100', ...levels]} bars={errorBars}
                    limits={[{ v: 10.1, color: '#8a2024', w: 3 }, { v: 5.05, color: '#c8c850', w: 2 }, { v: 3.05, color: '#0d6b10', w: 2 }]}
                  />
                </MiddleColumn>

                <RightColumn>
                  <CiePanel><CieChart /></CiePanel>
                  <Preview />
                </RightColumn>
              </Workspace>

              <BottomBar>
                <ColorPicker aria-label="Select colour">
                  <Knob $size={19} $tone={knobLight}><Triangle d="up" s={11} c="#222" /></Knob>
                  <i />
                </ColorPicker>
                {levels.map((l, i) => (
                  <PatchButton key={l} $on={i === 4}><PatchColor $c={patches[i]} />{l}</PatchButton>
                ))}
                <Spacer />
                <PatternBox>
                  <button aria-label="Pattern options"><Knob $size={19} $tone={knobLight}><Triangle d="up" s={11} c="#222" /></Knob></button>
                  <button aria-label="Pattern window"><PatternFrame><i /></PatternFrame></button>
                </PatternBox>
                <Transport>
                  <TransportButton aria-label="Stop"><Knob $size={25} $tone={knobLight}><svg width="11" height="11"><path d="M0 0H11V11H0z" fill="#222" /></svg></Knob></TransportButton>
                  <TransportButton aria-label="Play"><Knob $size={25} $tone={knobLight}><Triangle d="right" s={13} c="#222" /></Knob></TransportButton>
                  <TransportButton aria-label="Read series"><Knob $size={25} $tone={knobLight}>
                    <svg width="16" height="14" fill="none" stroke="#222" strokeWidth="2"><path d="M5 1H2V13H5M11 1H14V13H11" /><path d="M3 7H13" strokeDasharray="2 1" /></svg>
                  </Knob></TransportButton>
                  <TransportButton aria-label="Read continuous"><Knob $size={25} $tone={knobLight}>
                    <svg width="18" height="9" fill="none" stroke="#333" strokeWidth="2"><circle cx="5" cy="4.500" r="3" /><circle cx="13" cy="4.500" r="3" /></svg>
                  </Knob></TransportButton>
                  <TransportButton $off aria-label="Refresh"><Knob $size={25} $tone={knobDark}>
                    <svg width="16" height="16" fill="none" stroke="#161616" strokeWidth="3"><path d="M2 7Q3 2 8 2T13 5M14 9Q13 14 8 14T3 11" /><path d="M14 1V6H9M2 15V10H7" strokeWidth="2" /></svg>
                  </Knob></TransportButton>
                  <TransportButton $off aria-label="Record"><Knob $size={25} $tone={knobDark} /></TransportButton>
                  <StepButton>
                    <Knob $size={25} $tone={knobLight}><svg width="12" height="12" fill="none" stroke="#333" strokeWidth="1.600"><path d="M6 0L1 6L6 12M11 0L6 6L11 12" /></svg></Knob>
                    Back
                  </StepButton>
                  <StepButton>
                    Next
                    <Knob $size={25} $tone={knobLight}><svg width="12" height="12" fill="none" stroke="#333" strokeWidth="1.600"><path d="M1 0L6 6L1 12M6 0L11 6L6 12" /></svg></Knob>
                  </StepButton>
                </Transport>
              </BottomBar>
            </Content>
          </Body>
        </AppArea>

        <TaskBar>
          {taskIcons.map(([name, art], i) => (
            <TaskButton key={name} aria-label={name} $first={i === 0} $active={i === 12}><Svg40>{art}</Svg40></TaskButton>
          ))}
          <Tray>
            {trayIcons.map(([name, art]) => (
              <button key={name} aria-label={name}><svg width="20" height="20" viewBox="0 0 20 20">{art}</svg></button>
            ))}
          </Tray>
          <Clock>17:28<br />06.10.2014</Clock>
        </TaskBar>
      </Page>
    </>
  );
}
